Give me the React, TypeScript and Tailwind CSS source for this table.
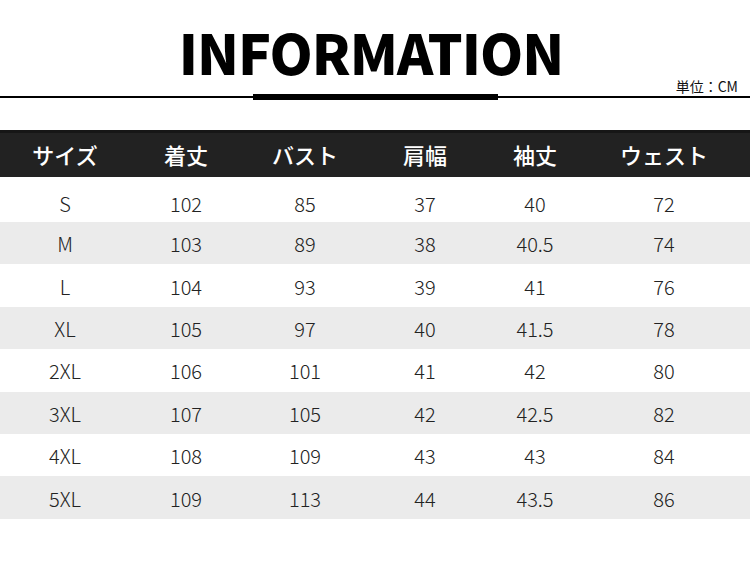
import React from "react";

const headers = ["サイズ", "着丈", "バスト", "肩幅", "袖丈", "ウェスト"];
const rows: string[][] = [
  ["S", "102", "85", "37", "40", "72"],
  ["M", "103", "89", "38", "40.5", "74"],
  ["L", "104", "93", "39", "41", "76"],
  ["XL", "105", "97", "40", "41.5", "78"],
  ["2XL", "106", "101", "41", "42", "80"],
  ["3XL", "107", "105", "42", "42.5", "82"],
  ["4XL", "108", "109", "43", "43", "84"],
  ["5XL", "109", "113", "44", "43.5", "86"],
];

const cols = "grid grid-cols-[130px_112px_126px_114px_106px_152px_1fr]";
const font = { fontFamily: '"Noto Sans CJK JP", "Noto Sans", sans-serif' };

export default function App() {
  return (
    <div className="w-[750px] h-[570px] bg-white overflow-hidden" style={font}>
      <div className="h-[94px] grid grid-cols-[1fr_auto_1fr]">
        <div />
        <div className="pt-[21px] text-[55px] leading-[60px] font-black text-black tracking-[-1px] pr-[8px]">
          INFORMATION
        </div>
        <div className="flex items-end justify-end pr-[12px] pb-[0px]">
          <span className="text-[14px] leading-[16px] font-normal text-[#111]">単位：CM</span>
        </div>
      </div>
      <div className="h-[6px] flex justify-start bg-[linear-gradient(to_bottom,transparent_2px,black_2px,black_4px,transparent_4px)]">
        <div className="ml-[253px] w-[245px] h-[6px] bg-black" />
      </div>
      <div className="mt-[30px]">
        <div className={`${cols} h-[47px] bg-[#222] border-t-[3px] border-[#161616] items-center text-white text-[22px] font-medium`}>
          {headers.map((h) => (
            <div key={h} className="text-center leading-none pb-[2px]">
              {h}
            </div>
          ))}
        </div>
        {rows.map((r, i) => (
          <div
            key={r[0]}
            className={`${cols} ${i === 0 ? "h-[45px]" : "h-[42.4px]"} ${i % 2 === 1 ? "bg-[#ebebeb]" : "bg-white"} items-center text-[20px] font-light text-[#222]`}
          >
            {r.map((c, j) => (
              <div key={j} className={`text-center leading-none ${i === 0 ? "pt-[8px]" : "pt-[2px]"}`}>
                {c}
              </div>
            ))}
          </div>
        ))}
      </div>
    </div>
  );
}
